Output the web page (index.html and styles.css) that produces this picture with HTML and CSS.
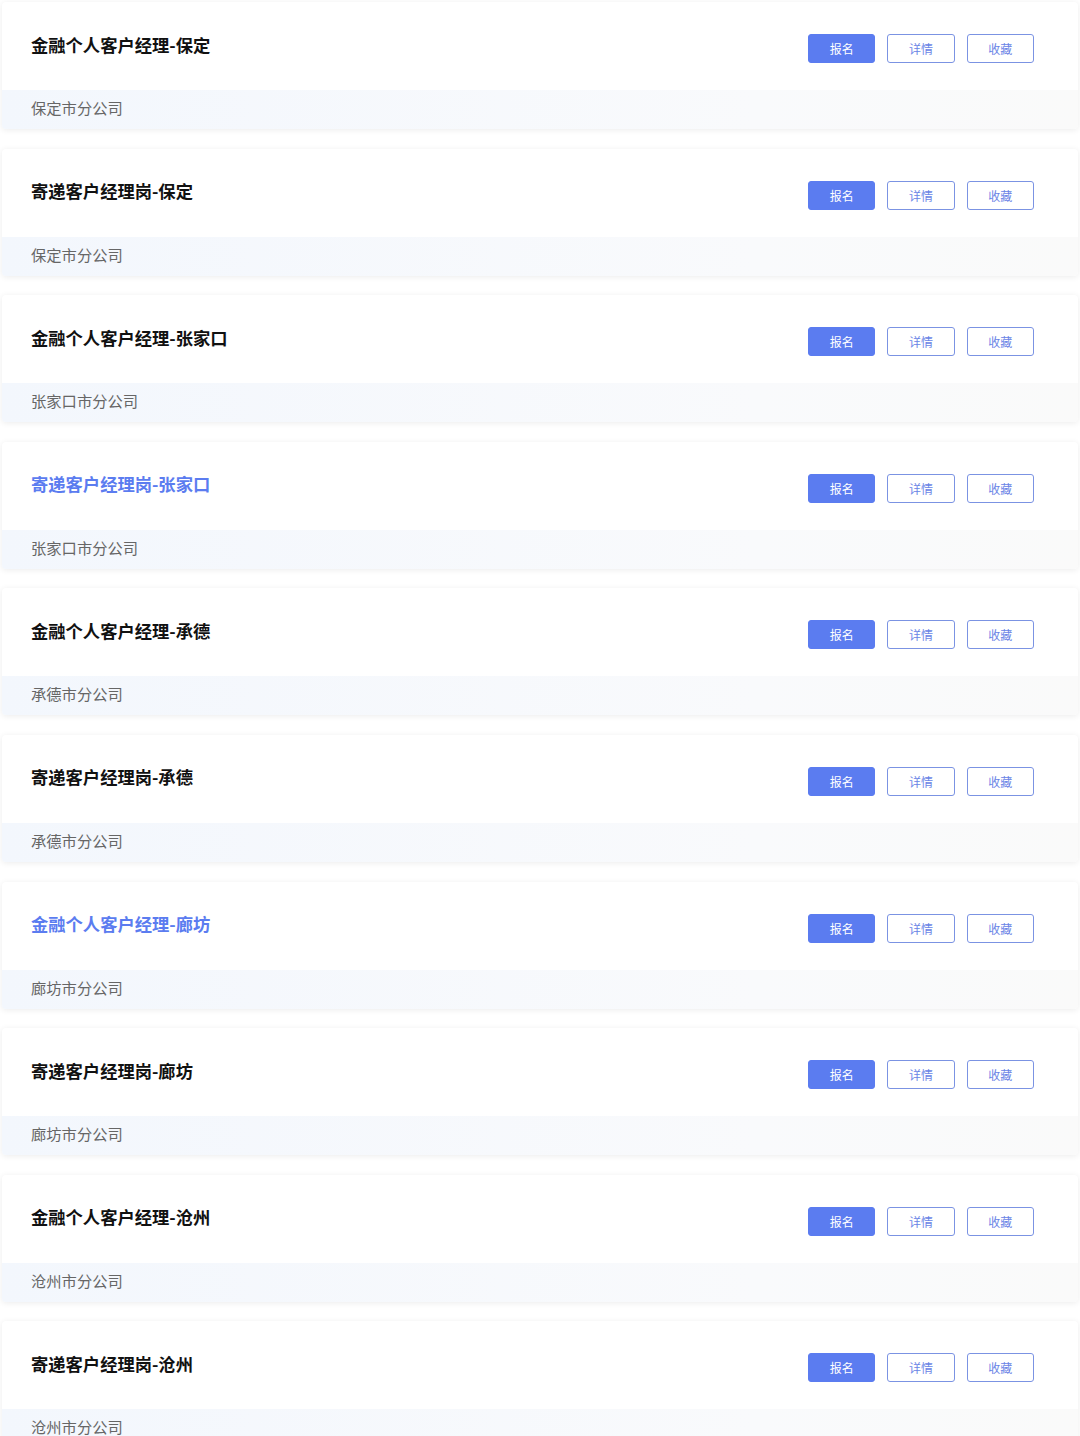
FILE: index.html
```html
<!DOCTYPE html>
<html>
<head>
    <title>岗位列表</title>
    <link rel="stylesheet" href="styles.css">
</head>
<body>
    <div class="job-list">
        <div class="job-card">
            <div class="job-main">
                <div class="job-title">金融个人客户经理-保定</div>
                <div class="job-actions">
                    <button class="btn btn-primary">报名</button>
                    <button class="btn btn-outline">详情</button>
                    <button class="btn btn-outline">收藏</button>
                </div>
            </div>
            <div class="job-footer">保定市分公司</div>
        </div>

        <div class="job-card">
            <div class="job-main">
                <div class="job-title">寄递客户经理岗-保定</div>
                <div class="job-actions">
                    <button class="btn btn-primary">报名</button>
                    <button class="btn btn-outline">详情</button>
                    <button class="btn btn-outline">收藏</button>
                </div>
            </div>
            <div class="job-footer">保定市分公司</div>
        </div>

        <div class="job-card">
            <div class="job-main">
                <div class="job-title">金融个人客户经理-张家口</div>
                <div class="job-actions">
                    <button class="btn btn-primary">报名</button>
                    <button class="btn btn-outline">详情</button>
                    <button class="btn btn-outline">收藏</button>
                </div>
            </div>
            <div class="job-footer">张家口市分公司</div>
        </div>

        <div class="job-card">
            <div class="job-main">
                <div class="job-title job-title-active">寄递客户经理岗-张家口</div>
                <div class="job-actions">
                    <button class="btn btn-primary">报名</button>
                    <button class="btn btn-outline">详情</button>
                    <button class="btn btn-outline">收藏</button>
                </div>
            </div>
            <div class="job-footer">张家口市分公司</div>
        </div>

        <div class="job-card">
            <div class="job-main">
                <div class="job-title">金融个人客户经理-承德</div>
                <div class="job-actions">
                    <button class="btn btn-primary">报名</button>
                    <button class="btn btn-outline">详情</button>
                    <button class="btn btn-outline">收藏</button>
                </div>
            </div>
            <div class="job-footer">承德市分公司</div>
        </div>

        <div class="job-card">
            <div class="job-main">
                <div class="job-title">寄递客户经理岗-承德</div>
                <div class="job-actions">
                    <button class="btn btn-primary">报名</button>
                    <button class="btn btn-outline">详情</button>
                    <button class="btn btn-outline">收藏</button>
                </div>
            </div>
            <div class="job-footer">承德市分公司</div>
        </div>

        <div class="job-card">
            <div class="job-main">
                <div class="job-title job-title-active">金融个人客户经理-廊坊</div>
                <div class="job-actions">
                    <button class="btn btn-primary">报名</button>
                    <button class="btn btn-outline">详情</button>
                    <button class="btn btn-outline">收藏</button>
                </div>
            </div>
            <div class="job-footer">廊坊市分公司</div>
        </div>

        <div class="job-card">
            <div class="job-main">
                <div class="job-title">寄递客户经理岗-廊坊</div>
                <div class="job-actions">
                    <button class="btn btn-primary">报名</button>
                    <button class="btn btn-outline">详情</button>
                    <button class="btn btn-outline">收藏</button>
                </div>
            </div>
            <div class="job-footer">廊坊市分公司</div>
        </div>

        <div class="job-card">
            <div class="job-main">
                <div class="job-title">金融个人客户经理-沧州</div>
                <div class="job-actions">
                    <button class="btn btn-primary">报名</button>
                    <button class="btn btn-outline">详情</button>
                    <button class="btn btn-outline">收藏</button>
                </div>
            </div>
            <div class="job-footer">沧州市分公司</div>
        </div>

        <div class="job-card">
            <div class="job-main">
                <div class="job-title">寄递客户经理岗-沧州</div>
                <div class="job-actions">
                    <button class="btn btn-primary">报名</button>
                    <button class="btn btn-outline">详情</button>
                    <button class="btn btn-outline">收藏</button>
                </div>
            </div>
            <div class="job-footer">沧州市分公司</div>
        </div>
    </div>
</body>
</html>
```

FILE: styles.css
```css
body {
    margin: 0;
    background: #fff;
    font-family: "Noto Sans CJK SC", "Noto Sans", sans-serif;
}

.job-list {
    display: flex;
    flex-direction: column;
    gap: 19.6px;
    padding: 2px 2px 0 2px;
}

.job-card {
    background: #fff;
    border-radius: 4px;
    box-shadow: 0 1px 6px rgba(0, 0, 0, 0.08);
    overflow: hidden;
}

.job-main {
    height: 88px;
    display: flex;
    align-items: center;
    justify-content: space-between;
    padding: 0 44px 0 29px;
}

.job-title {
    font-size: 17.3px;
    font-weight: bold;
    color: #111;
    margin-top: -4px;
}

.job-title-active {
    color: #5b7cf0;
}

.job-actions {
    display: flex;
    gap: 12px;
    margin-top: 5px;
}

.btn {
    width: 67.3px;
    height: 29px;
    border-radius: 3px;
    font-family: "Noto Sans CJK SC", sans-serif;
    font-size: 12px;
    cursor: pointer;
    padding: 0;
}

.btn-primary {
    background: #5b7cf0;
    border: 1px solid #5b7cf0;
    color: #fff;
}

.btn-outline {
    background: #fff;
    border: 1px solid #7b93e3;
    color: #6a84e6;
}

.job-footer {
    height: 39px;
    line-height: 34px;
    padding-left: 29px;
    font-size: 15.3px;
    color: #666;
    background: linear-gradient(to right, #f3f7fd, #f9fafc 70%, #fafafa);
}
```
